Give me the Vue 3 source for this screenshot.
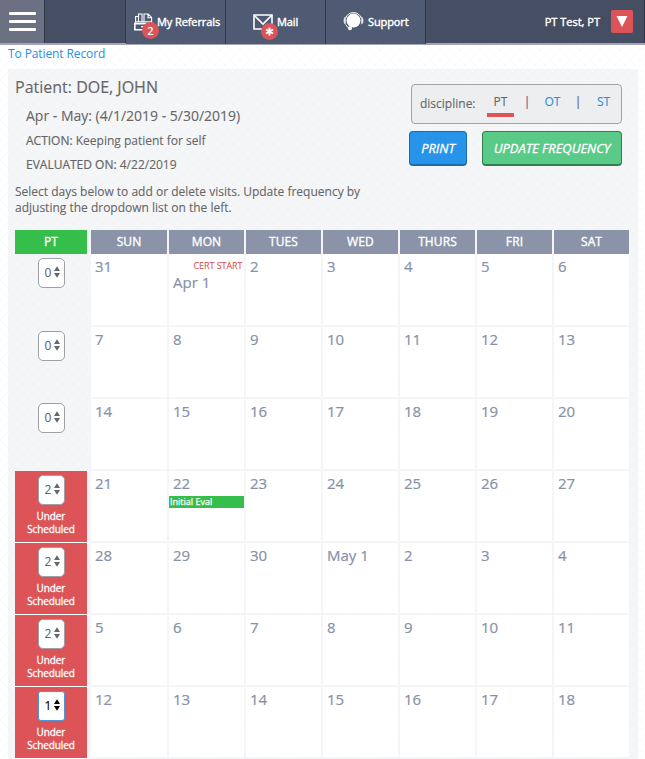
<script setup>
const days = ['SUN', 'MON', 'TUES', 'WED', 'THURS', 'FRI', 'SAT']
const weeks = [
  { visits: 0, dates: ['31', 'Apr 1', '2', '3', '4', '5', '6'] },
  { visits: 0, dates: ['7', '8', '9', '10', '11', '12', '13'] },
  { visits: 0, dates: ['14', '15', '16', '17', '18', '19', '20'] },
  { visits: 2, under: true, dates: ['21', '22', '23', '24', '25', '26', '27'] },
  { visits: 2, under: true, dates: ['28', '29', '30', 'May 1', '2', '3', '4'] },
  { visits: 2, under: true, dates: ['5', '6', '7', '8', '9', '10', '11'] },
  { visits: 1, under: true, focus: true, dates: ['12', '13', '14', '15', '16', '17', '18'] },
]
</script>

<template>
  <div class="page">
    <header class="topbar">
      <button class="menu" aria-label="Menu"><i></i><i></i><i></i></button>
      <div class="spacer"></div>
      <a class="nav referrals">
        <span class="icon">
          <svg width="20" height="18" viewBox="0 0 20 18" fill="none" stroke="#fff" stroke-width="1.1">
            <path d="M.8 10.6H18.4V16.8H.8Z" stroke-width="1.6" />
            <path d="M1.6 10V3.5H4.5V9.5M4.5 3.5V1H8V9.5M10 9.5V1H14.2L17.6 4.4V10M14 1V4.8H17.6M1.6 8.8H17.6" />
            <path d="M7.2 13.7H11.5" stroke-width="1.4" />
          </svg>
          <b class="badge">2</b>
        </span>
        <span>My Referrals</span>
      </a>
      <a class="nav mail">
        <span class="icon">
          <svg width="20" height="16" viewBox="0 0 20 16" fill="none" stroke="#fff" stroke-width="1.6">
            <path d="M1 1H19V15H1Z" />
            <path d="M1.5 1.5L10 10L18.5 1.5" />
          </svg>
          <b class="badge">
            <svg width="9" height="9" viewBox="0 0 9 9" stroke="#fff" stroke-width="1.9">
              <path d="M4.5 .5V8.5M1 2.5L8 6.5M8 2.5L1 6.5" />
            </svg>
          </b>
        </span>
        <span>Mail</span>
      </a>
      <a class="nav support">
        <svg width="21" height="20" viewBox="0 0 21 20">
          <circle cx="10.5" cy="9.6" r="7" fill="#fff" />
          <path d="M2.8 7A8.2 8.2 0 0 1 18.2 7" fill="none" stroke="#fff" stroke-width="1" />
          <path d="M2.8 5.5C-.2 6 -.2 13.2 2.8 13.6ZM18.2 5.5C21.2 6 21.2 13.2 18.2 13.6Z" fill="#dfe2e8" />
          <path d="M2.8 13.5Q4 16.5 7 17.5" fill="none" stroke="#fff" stroke-width="1" />
          <circle cx="7" cy="17.3" r="2" fill="#fff" />
        </svg>
        <span>Support</span>
      </a>
      <div class="user">
        <span>PT Test, PT</span>
        <button class="drop" aria-label="Account">
          <svg width="12" height="11" viewBox="0 0 12 11"><path d="M.5 0H11.5L6 11Z" fill="#fff" /></svg>
        </button>
      </div>
    </header>

    <div class="crumb"><a>To Patient Record</a></div>

    <main class="panel">
      <div class="summary">
        <section class="info">
          <h1>Patient: <span>DOE, JOHN</span></h1>
          <h2>Apr - May: (4/1/2019 - 5/30/2019)</h2>
          <p class="line"><span>ACTION:</span> Keeping patient for self</p>
          <p class="line"><span>EVALUATED ON:</span> 4/22/2019</p>
          <p class="help">Select days below to add or delete visits. Update frequency by adjusting the dropdown list on the left.</p>
        </section>
        <section class="controls">
          <div class="discipline">
            <span class="label">discipline:</span>
            <span class="tab active">PT</span>
            <span class="bar">|</span>
            <a class="tab">OT</a>
            <span class="bar">|</span>
            <a class="tab">ST</a>
          </div>
          <div class="buttons">
            <button class="btn print">PRINT</button>
            <button class="btn update">UPDATE FREQUENCY</button>
          </div>
        </section>
      </div>

      <div class="calendar">
        <div class="row head">
          <div class="pt">PT</div>
          <div v-for="d in days" :key="d" class="day">{{ d }}</div>
        </div>
        <div v-for="(w, i) in weeks" :key="i" class="row week">
          <div class="pt" :class="{ under: w.under }">
            <div class="select" :class="{ focus: w.focus }">
              <span>{{ w.visits }}</span>
              <svg width="6" height="12" viewBox="0 0 6 12"><path d="M0 5L3 .3L6 5ZM0 7L3 11.7L6 7Z" fill="currentColor" /></svg>
            </div>
            <div v-if="w.under" class="status">Under<br />Scheduled</div>
          </div>
          <div v-for="d in w.dates" :key="d" class="cell">
            <div v-if="d === 'Apr 1'" class="cert">CERT START</div>
            <div class="date">{{ d }}</div>
            <div v-if="d === '22'" class="event">Initial Eval</div>
          </div>
        </div>
      </div>
    </main>
  </div>
</template>

<style>
body {
  overflow: hidden;
}
</style>

<style scoped>
* {
  box-sizing: border-box;
}
.page {
  --hatch: rgba(0, 0, 0, 0.018);
  height: 759px;
  overflow: hidden;
  font-family: 'Open Sans', sans-serif;
  font-size: 12px;
  color: #666;
  -webkit-text-stroke: 0.1px currentColor;
  background-color: #fff;
}
.page,
.panel {
  background-image:
    linear-gradient(45deg, transparent 46%, var(--hatch) 46% 54%, transparent 54%),
    linear-gradient(-45deg, transparent 46%, var(--hatch) 46% 54%, transparent 54%);
  background-size: 10px 10px;
}
h1, h2, p {
  margin: 0;
  font-weight: 400;
}
button {
  border: 0;
  padding: 0;
  font-family: inherit;
}
.topbar {
  display: flex;
  height: 45px;
  background: #464e63;
  border-bottom: 2px solid #a3a5b1;
  color: #fff;
  font-size: 11px;
  white-space: nowrap;
  -webkit-text-stroke: 0.4px currentColor;
}
.menu {
  width: 45px;
  height: 43px;
  background: #6b7182;
  border-right: 1px solid #30374a;
  display: flex;
  flex-direction: column;
  align-items: center;
  justify-content: center;
  gap: 5px;
}
.menu i {
  width: 27px;
  height: 3px;
  border-radius: 1px;
  background: #fff;
}
.spacer {
  width: 81px;
  border-right: 1px solid #30374a;
}
.nav {
  width: 100px;
  height: 44px;
  background: #4f5b73;
  border-right: 1px solid #30374a;
  display: flex;
  align-items: center;
  padding-bottom: 2px;
  letter-spacing: -0.1px;
}
.referrals {
  padding-left: 8px;
  gap: 3px;
}
.mail {
  padding-left: 27px;
  gap: 4px;
}
.support {
  padding-left: 17px;
  gap: 4px;
}
.icon {
  position: relative;
  display: flex;
  margin-top: 2px;
}
.badge {
  position: absolute;
  left: 8px;
  top: 9px;
  width: 17px;
  height: 17px;
  border-radius: 50%;
  background: #dc5358;
  display: flex;
  align-items: center;
  justify-content: center;
  font-size: 11px;
  font-weight: 600;
  letter-spacing: 0;
  -webkit-text-stroke: 0;
}
.user {
  flex: 1;
  display: flex;
  align-items: center;
  justify-content: flex-end;
  gap: 11px;
  padding-right: 11px;
  border-right: 1px solid #30374a;
}
.drop {
  width: 22px;
  height: 23px;
  border-radius: 2px;
  background: #dc5358;
  display: flex;
  align-items: center;
  justify-content: center;
}
.crumb {
  height: 24px;
  padding-left: 8px;
  line-height: 18px;
  letter-spacing: -0.1px;
  -webkit-text-stroke: 0;
}
.crumb a,
a.tab {
  color: #2a8ee4;
}
.panel {
  --hatch: rgba(0, 0, 0, 0.01);
  margin: 0 7px 0 8px;
  height: 700px;
  padding-left: 7px;
  background-color: #f5f6f8;
}
.summary {
  display: flex;
  justify-content: space-between;
  height: 161px;
}
.info {
  width: 370px;
}
h1 {
  font-size: 16px;
  line-height: 22px;
  padding-top: 7px;
}
h1 span,
.line span {
  -webkit-text-stroke: 0.2px currentColor;
}
h2 {
  font-size: 14px;
  line-height: 20px;
  margin: 8px 0 0 11px;
}
.line {
  line-height: 16px;
  margin: 7px 0 0 11px;
}
.line + .line {
  margin-top: 8px;
}
.help {
  line-height: 16px;
  margin-top: 11px;
}
.controls {
  width: 213px;
  margin-right: 16px;
  padding-top: 15px;
}
.discipline {
  margin-left: 2px;
  height: 40px;
  border: 1px solid #a2a3a6;
  border-radius: 4px;
  background: #edeeef;
  display: flex;
  align-items: flex-start;
  padding-left: 8px;
  line-height: 16px;
}
.label {
  width: 67px;
  padding-top: 11px;
}
.tab {
  width: 27px;
  height: 24px;
  margin-top: 9px;
  text-align: center;
}
.active {
  height: 23px;
  border-bottom: 4px solid #dc5358;
}
a.tab {
  width: 25px;
}
.bar {
  width: 26px;
  padding-top: 9px;
  text-align: center;
  color: #56528c;
}
.buttons {
  display: flex;
  justify-content: space-between;
  margin-top: 7px;
}
.btn {
  height: 35px;
  border-radius: 4px;
  color: #fff;
  font-size: 13px;
  font-style: italic;
  letter-spacing: -0.05px;
  -webkit-text-stroke: 0.3px currentColor;
}
.print {
  width: 58px;
  background: #2894e9;
  border: 1px solid #1c6cad;
  border-bottom-width: 2px;
}
.update {
  width: 140px;
  background: #5aca88;
  border: 1px solid #317f50;
  border-bottom-width: 2px;
}
.row {
  display: grid;
  grid-template-columns: 74px 76px repeat(6, 75px);
  column-gap: 2px;
}
.row .pt {
  width: 72px;
}
.head {
  height: 24px;
  line-height: 24px;
  text-align: center;
  color: #fff;
  letter-spacing: 0.1px;
  -webkit-text-stroke: 0.35px currentColor;
}
.head .pt {
  background: #36be4b;
}
.day {
  background: #8a93a8;
}
.week {
  height: 72px;
}
.head + .week {
  height: 73px;
}
.week .pt {
  height: 100%;
  padding-top: 4px;
  display: flex;
  flex-direction: column;
  align-items: center;
}
.under {
  background: #dc5358;
  border-bottom: 1px solid #fff;
}
.select {
  width: 27px;
  height: 30px;
  border: 1px solid #9fa0a6;
  border-radius: 5px;
  background: #fff;
  color: #666;
  display: flex;
  align-items: center;
  padding: 0 0 2px 6px;
  gap: 2.5px;
}
.focus {
  color: #000;
  border-color: #4d95d6;
  border-radius: 3px;
}
.status {
  margin-top: 5px;
  text-align: center;
  font-size: 10px;
  line-height: 13px;
  letter-spacing: -0.1px;
  -webkit-text-stroke: 0.3px currentColor;
  color: #fff;
}
.cell {
  background: #fff;
  margin-bottom: 2px;
  color: #8791a8;
}
.date {
  padding-left: 4px;
  font-size: 15px;
  line-height: 20px;
  padding-top: 2px;
  -webkit-text-stroke: 0.2px currentColor;
}
.cert {
  text-align: right;
  color: #d9534f;
  font-size: 9px;
  line-height: 12px;
  padding: 6px 1.5px 0 0;
  letter-spacing: -0.05px;
}
.cert + .date {
  padding-top: 0;
}
.event {
  margin-top: 3px;
  height: 12px;
  padding-left: 1px;
  background: #36be4b;
  color: #fff;
  font-size: 9px;
  line-height: 12px;
  -webkit-text-stroke: 0.25px currentColor;
}
</style>
